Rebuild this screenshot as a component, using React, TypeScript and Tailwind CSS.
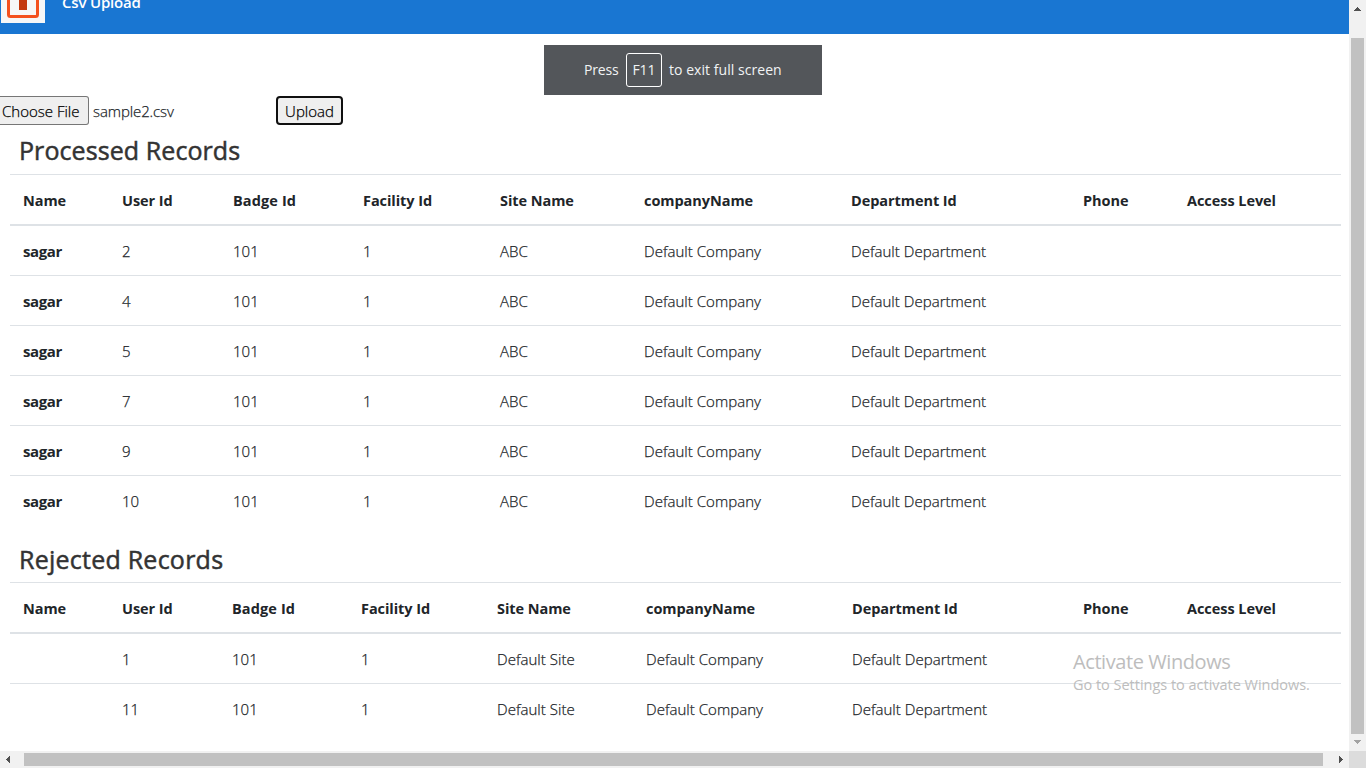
type Table = { title: string; widths: number[]; rows: string[][] };

const headings = ['Name', 'User Id', 'Badge Id', 'Facility Id', 'Site Name', 'companyName', 'Department Id', 'Phone', 'Access Level'];

const processed: Table = {
  title: 'Processed Records',
  widths: [99, 111, 130, 137, 144, 207, 232, 104, 167],
  rows: ['2', '4', '5', '7', '9', '10'].map((id) => ['sagar', id, '101', '1', 'ABC', 'Default Company', 'Default Department', '', '']),
};

const rejected: Table = {
  title: 'Rejected Records',
  widths: [99, 110, 129, 136, 149, 206, 231, 104, 167],
  rows: ['1', '11'].map((id) => ['', id, '101', '1', 'Default Site', 'Default Company', 'Default Department', '', '']),
};

function Records({ table }: { table: Table }) {
  return (
    <table className="ml-[10px] w-[1331px] table-fixed border-separate border-spacing-0 text-left text-[15px] leading-6 text-[#212529]">
      <colgroup>
        {table.widths.map((w, i) => <col key={i} style={{ width: w }} />)}
      </colgroup>
      <thead>
        <tr className="h-[52px]">
          {headings.map((h, i) => (
            <th key={h} className={`border-t border-b-2 border-[#dee2e6] p-0 pt-[2px] pl-[13px] text-[14.5px] font-bold whitespace-nowrap ${i === 2 ? 'tracking-[0.12px]' : 'tracking-[-0.06px]'}`}>{h}</th>
          ))}
        </tr>
      </thead>
      <tbody>
        {table.rows.map((row, r) => (
          <tr key={r} className="group h-[50px]">
            {row.map((cell, c) => (
              <td key={c} className={`border-b border-[#dee2e6] p-0 pl-[13px] whitespace-nowrap group-last:border-transparent ${c === 0 ? 'font-bold tracking-[-0.4px]' : 'font-light tracking-[0.04px] [-webkit-text-stroke:0.25px]'}`}>{cell}</td>
            ))}
          </tr>
        ))}
      </tbody>
    </table>
  );
}

export default function App() {
  return (
    <div className="relative grid h-[768px] w-[1366px] grid-cols-[1349px_17px] grid-rows-[751px_17px] overflow-hidden bg-white font-['Open_Sans','Noto_Sans',sans-serif]">
      <main className="overflow-hidden">
        <header className="flex h-[34px] items-start bg-[#1976d2]">
          <svg width="44" height="23" viewBox="0 0 44 23" className="ml-px shrink-0">
            <rect width="44" height="23" fill="#f7f7f7" />
            <path d="M7.5 -4V14.5Q7.5 16.5 9.5 16.5H34.5Q36.5 16.5 36.5 14.5V-4" fill="none" stroke="#f4511e" strokeWidth="3" />
            <rect x="18" width="8" height="10" fill="#c4390f" />
          </svg>
          <div className="-mt-[10px] ml-[17px] text-[15px] leading-6 font-semibold tracking-[-0.18px] whitespace-nowrap text-white">Csv Upload</div>
        </header>
        <div className="mt-[62px] flex h-[29px] items-center text-[15px] font-light text-[#212529] [-webkit-text-stroke:0.25px]">
          <button className="h-[29px] w-[89px] rounded-r-[3px] border border-l-0 border-[#767676] bg-[#efefef] pl-[2px] text-left leading-6 whitespace-nowrap text-black">Choose File</button>
          <span className="w-[187px] pt-px pl-1 tracking-[-0.1px]">sample2.csv</span>
          <button className="h-[29px] w-[67px] rounded-[4px] border-2 border-[#101010] bg-[#efefef] pt-px text-center leading-6 text-black">Upload</button>
        </div>
        <h2 className="flex h-[49px] items-center pt-[3px] pl-[19px] text-[25px] font-normal tracking-[0.08px] text-[#333] [-webkit-text-stroke:0.5px]">{processed.title}</h2>
        <Records table={processed} />
        <h2 className="flex h-[56px] items-center pt-[12px] pl-[19px] text-[25px] font-normal tracking-[0.24px] text-[#333] [-webkit-text-stroke:0.5px]">{rejected.title}</h2>
        <Records table={rejected} />
      </main>

      <div className="flex flex-col items-center bg-[#f1f1f1]">
        <svg width="17" height="38" className="shrink-0" fill="#505050" shapeRendering="crispEdges"><path d="M8 7h1v1h1v1h1v1h1v1H5v-1h1V9h1V8h1z" /></svg>
        <div className="h-[696px] w-[13px] shrink-0 bg-[#c1c1c1]" />
        <svg width="17" height="17" className="shrink-0" fill="#a3a3a3" shapeRendering="crispEdges"><path d="M5 6h7v1h-1v1h-1v1H9v1H8V9H7V8H6V7H5z" /></svg>
      </div>
      <div className="flex items-center bg-[#f1f1f1]">
        <svg width="24" height="17" className="shrink-0" fill="#505050" shapeRendering="crispEdges"><path d="M10 5v7H9v-1H8v-1H7V9H6V8h1V7h1V6h1V5z" /></svg>
        <div className="h-[13px] w-[1299px] shrink-0 bg-[#c1c1c1]" />
        <svg width="26" height="17" className="shrink-0" fill="#505050" shapeRendering="crispEdges"><path d="M16 5h1v1h1v1h1v1h1v1h-1v1h-1v1h-1v1h-1z" /></svg>
      </div>
      <div className="bg-[#dcdcdc]" />

      <div className="absolute top-[45px] left-[544px] flex h-[50px] w-[278px] items-center bg-[#53565a] pl-10 text-[14px] whitespace-nowrap text-[#f1f3f4]">
        <span className="w-[42px] pb-[2px] tracking-[-0.2px]">Press</span>
        <span className="flex h-[34px] w-[36px] items-center justify-center rounded-[3px] border border-white pb-[2px]">F11</span>
        <span className="ml-[7px] pb-[2px] tracking-[0.05px]">to exit full screen</span>
      </div>
      <div className="absolute top-[649px] left-[1073px] whitespace-nowrap text-[#bdbdbd]">
        <div className="text-[20px] leading-[26px] tracking-[-0.42px]">Activate Windows</div>
        <div className="text-[14.5px] leading-5 tracking-[-0.02px]">Go to Settings to activate Windows.</div>
      </div>
    </div>
  );
}
